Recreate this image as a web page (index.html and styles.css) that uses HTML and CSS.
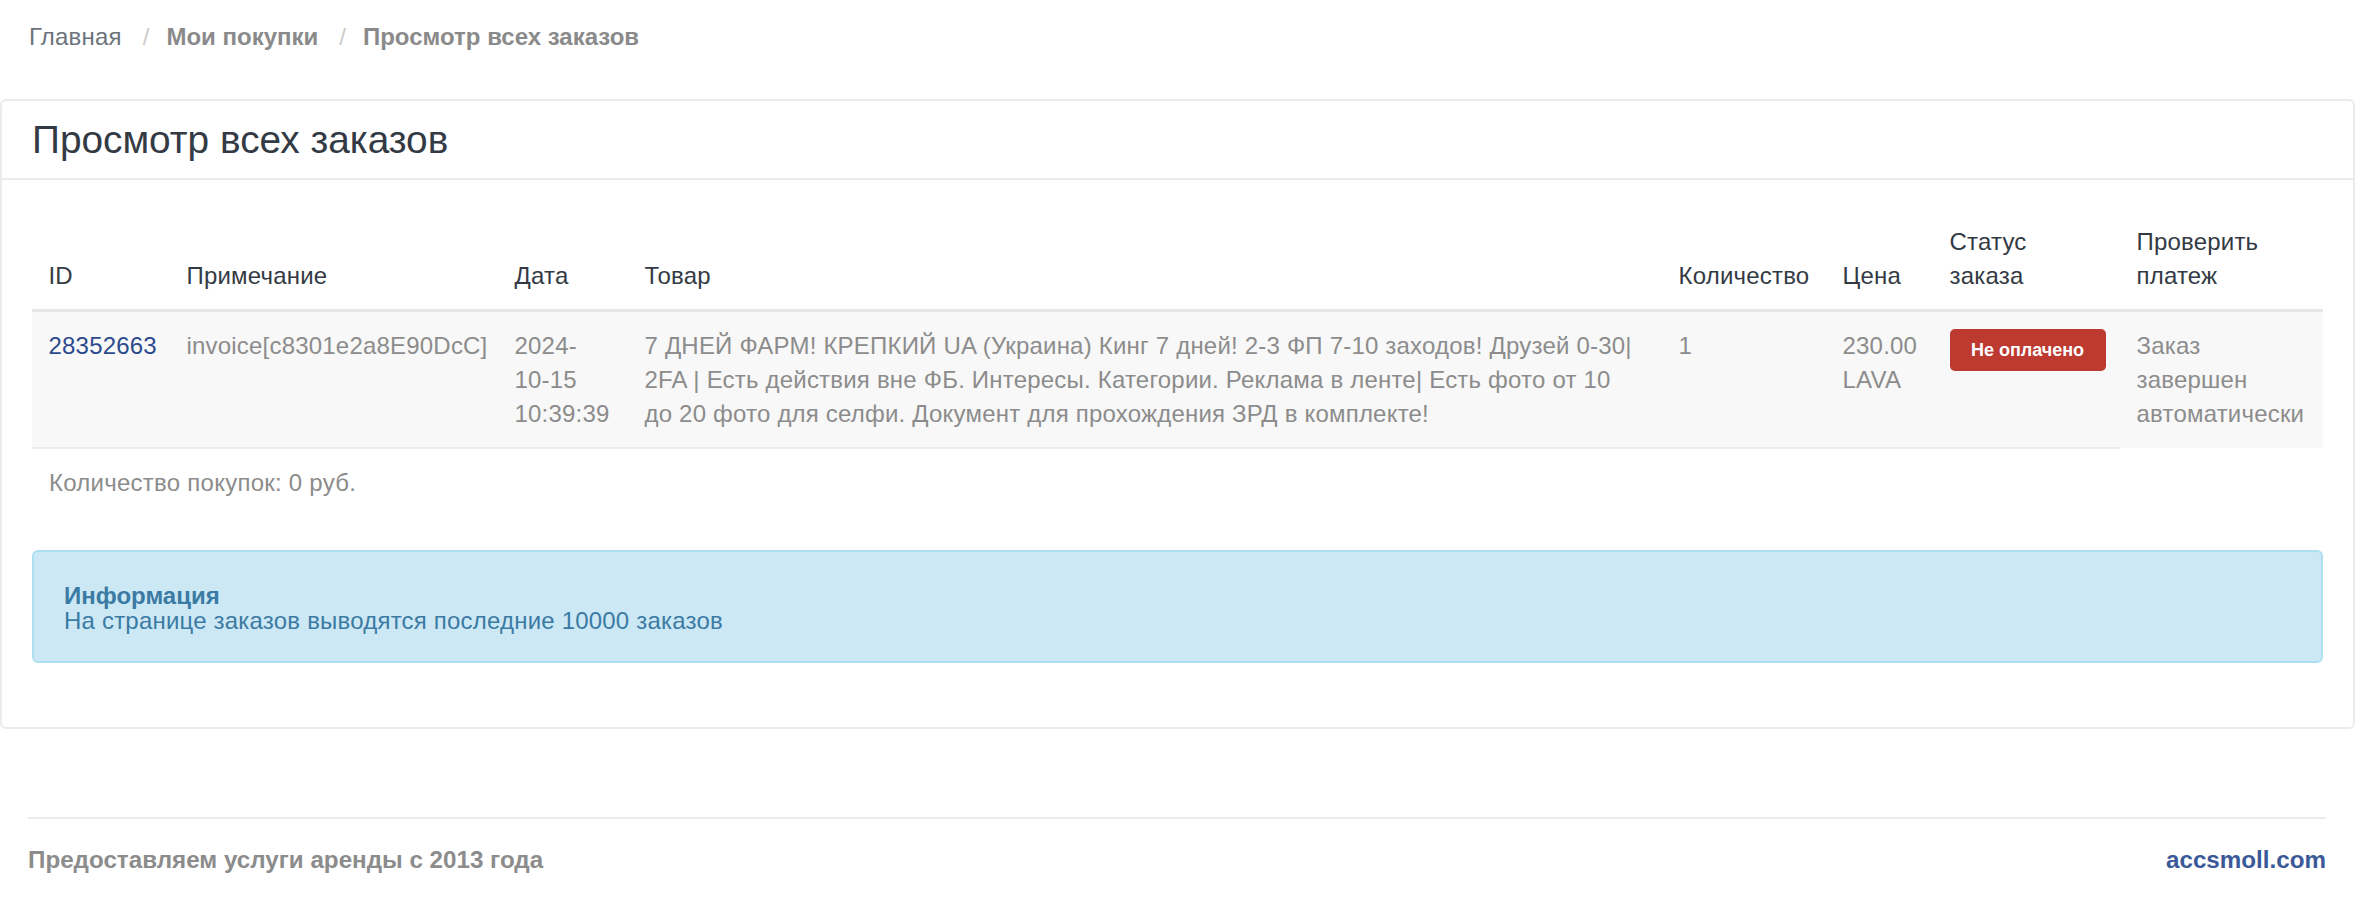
FILE: index.html
```html
<!DOCTYPE html>
<html lang="ru">
<head>
    <meta charset="UTF-8">
    <meta name="viewport" content="width=device-width, initial-scale=1.0">
    <title>Просмотр всех заказов</title>
    <link rel="stylesheet" href="styles.css">
</head>
<body>
    <ol class="breadcrumb">
        <li><a href="#">Главная</a></li>
        <li class="sep">/</li>
        <li class="strong">Мои покупки</li>
        <li class="sep">/</li>
        <li class="strong">Просмотр всех заказов</li>
    </ol>

    <div class="panel">
        <div class="panel-heading">
            <h3 class="panel-title">Просмотр всех заказов</h3>
        </div>
        <div class="panel-body">
            <table class="orders">
                <colgroup>
                    <col class="c-id">
                    <col class="c-note">
                    <col class="c-date">
                    <col class="c-item">
                    <col class="c-qty">
                    <col class="c-price">
                    <col class="c-status">
                    <col class="c-check">
                </colgroup>
                <thead>
                    <tr>
                        <th>ID</th>
                        <th>Примечание</th>
                        <th>Дата</th>
                        <th>Товар</th>
                        <th>Количество</th>
                        <th>Цена</th>
                        <th>Статус заказа</th>
                        <th>Проверить платеж</th>
                    </tr>
                </thead>
                <tbody>
                    <tr>
                        <td><a class="order-id" href="#">28352663</a></td>
                        <td>invoice[c8301e2a8E90DcC]</td>
                        <td>2024-10-15 10:39:39</td>
                        <td>7 ДНЕЙ ФАРМ! КРЕПКИЙ UA (Украина) Кинг 7 дней! 2-3 ФП 7-10 заходов! Друзей 0-30|<br>2FA | Есть действия вне ФБ. Интересы. Категории. Реклама в ленте| Есть фото от 10<br>до 20 фото для селфи. Документ для прохождения ЗРД в комплекте!</td>
                        <td>1</td>
                        <td>230.00 LAVA</td>
                        <td><span class="label-danger">Не оплачено</span></td>
                        <td class="check">Заказ завершен автоматически</td>
                    </tr>
                </tbody>
            </table>

            <div class="total">Количество покупок: 0 руб.</div>

            <div class="alert-info">
                <h4>Информация</h4>
                <p>На странице заказов выводятся последние 10000 заказов</p>
            </div>
        </div>
    </div>

    <footer class="footer">
        <span>Предоставляем услуги аренды с 2013 года</span>
        <a href="#">accsmoll.com</a>
    </footer>
</body>
</html>
```

FILE: styles.css
```css
body {
    margin: 0;
    font-family: "Liberation Sans", Arial, sans-serif;
    font-size: 24px;
    line-height: 33px;
    color: #333a44;
    background-color: white;
}

a {
    text-decoration: none;
}

.breadcrumb {
    display: flex;
    list-style: none;
    margin: 0 0 46px;
    padding: 20px 29px 0;
    color: #8a8a8a;
}

.breadcrumb a {
    color: #6c737d;
    letter-spacing: 0.2px;
}

.breadcrumb .sep {
    color: #cccccc;
    padding: 0 17px 0 21px;
}

.breadcrumb .strong {
    font-weight: bold;
}

.panel {
    margin-right: 3px;
    border: 2px solid #ebebeb;
    border-radius: 6px;
}

.panel-heading {
    padding: 17px 30px 16px;
    border-bottom: 2px solid #ebebeb;
}

.panel-title {
    margin: 0;
    font-size: 38.8px;
    line-height: 44px;
    font-weight: normal;
    color: #333a44;
}

.panel-body {
    padding: 28px 30px 64px;
}

.orders {
    width: 100%;
    border-collapse: collapse;
    table-layout: fixed;
    letter-spacing: 0.2px;
}

.c-id { width: 138px; }
.c-note { width: 328px; }
.c-date { width: 130px; }
.c-item { width: 1034px; }
.c-qty { width: 164px; }
.c-price { width: 107px; }
.c-status { width: 187px; }
.c-check { width: auto; }

.orders th {
    padding: 16.5px;
    line-height: 34px;
    text-align: left;
    vertical-align: bottom;
    font-weight: normal;
    color: #333a44;
    border-bottom: 3px solid #e6e6e6;
}

.orders td {
    padding: 16.5px;
    line-height: 34px;
    vertical-align: top;
    color: #8c8c8c;
    background: #f8f8f8;
    border-bottom: 2px solid #ececec;
}

.orders td.check {
    border-bottom: none;
}

.order-id {
    color: #2c4a8e;
}

.label-danger {
    display: inline-block;
    width: 156px;
    height: 42px;
    line-height: 42px;
    text-align: center;
    font-size: 18px;
    font-weight: bold;
    letter-spacing: 0;
    color: white;
    background: #bd3a31;
    border-radius: 5px;
}

.total {
    padding: 16.5px 17px;
    color: #8c8c8c;
    letter-spacing: 0.25px;
}

.alert-info {
    margin-top: 35px;
    padding: 31px 30px 28px;
    border: 2px solid #addff0;
    border-radius: 6px;
    background: #cde8f5;
    color: #3b7ba3;
    line-height: 25px;
}

.alert-info h4 {
    margin: 0;
    font-size: 24px;
    font-weight: bold;
}

.alert-info p {
    margin: 0;
    letter-spacing: 0.2px;
}

.footer {
    display: flex;
    justify-content: space-between;
    margin: 88px 32px 0 28px;
    padding-top: 24px;
    border-top: 2px solid #ebebeb;
    font-size: 24.2px;
    font-weight: bold;
    color: #8c8c8c;
}

.footer a {
    color: #3b5998;
}
```
